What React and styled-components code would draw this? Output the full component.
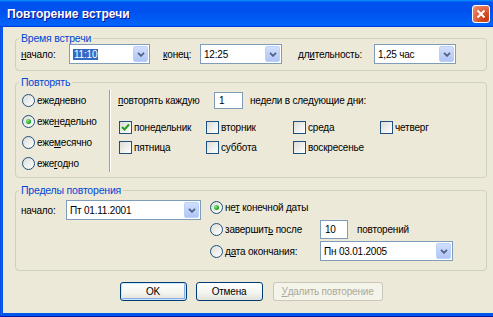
import React from "react";
import styled, { createGlobalStyle } from "styled-components";

const GlobalStyle = createGlobalStyle`
  html, body {
    margin: 0;
    padding: 0;
    overflow: hidden;
  }
  body {
    width: 493px;
    height: 317px;
    background: #fff;
    font-family: "Liberation Sans", Arial, sans-serif;
    font-size: 10px;
    letter-spacing: -0.2px;
    color: #000;
  }
`;

const Window = styled.div`
  width: 496px;
  height: 317px;
  display: flex;
  flex-direction: column;
  box-sizing: border-box;
  background: linear-gradient(90deg, #0831D9 0, #166AEE 1px, #0055EA 2px, #0055EA calc(100% - 2px), #0831D9 100%);
  border-bottom: 1px solid #0019A8;
`;

const TitleBar = styled.div`
  height: 27px;
  flex: none;
  display: flex;
  align-items: center;
  justify-content: space-between;
  padding: 0 6px 0 7px;
  background: linear-gradient(180deg, #0997ff, #0053ee 8%, #0050ee 40%, #0062f8 88%, #0066ff 93%, #005bff 95%, #003dd7 96%, #003dd7);
`;

const Title = styled.div`
  color: #fff;
  font-weight: bold;
  font-size: 12px;
  letter-spacing: 0;
  text-shadow: 1px 1px #0F1089;
`;

const CloseButton = styled.div`
  width: 18px;
  height: 18px;
  box-sizing: border-box;
  border: 1px solid #fff;
  border-radius: 3px;
  background: radial-gradient(circle at 80% 80%, #C23A12 0%, #DD5B33 45%, #E9876A 85%, #F6C6B5 100%);
  display: flex;
  align-items: center;
  justify-content: center;
`;

const Client = styled.div`
  flex: 1;
  margin: 0 3px 3px 3px;
  background: #ECE9D8;
  padding: 5px 6px 0 12px;
  display: flex;
  flex-direction: column;
`;

const Group = styled.fieldset`
  margin: ${(p) => p.$mt || 0}px 0 0 0;
  padding: 0;
  border: 1px solid #D0D0BF;
  border-radius: 4px;
  min-width: 0;
`;

const Legend = styled.legend`
  color: #0046D5;
  font-size: 10.5px;
  line-height: 12px;
  padding: 0 2px;
  margin-left: 3px;
`;

const Row = styled.div`
  display: flex;
  align-items: center;
  height: ${(p) => p.$h || 20}px;
`;

const TimeRow = styled(Row)`
  padding: 0 0 6px 5px;
`;

const FieldLabel = styled.span`
  width: ${(p) => p.$w}px;
  margin-left: ${(p) => p.$ml || 0}px;
  flex: none;
  white-space: nowrap;
  color: ${(p) => (p.$muted ? "#ACA899" : "#000")};
`;

const U = styled.span`
  text-decoration: underline;
`;

const Combo = styled.div`
  width: ${(p) => p.$w}px;
  height: ${(p) => p.$h || 20}px;
  flex: none;
  box-sizing: border-box;
  border: 1px solid #7F9DB9;
  background: #fff;
  display: flex;
  align-items: center;
  padding: 1px;
`;

const ComboValue = styled.div`
  flex: 1;
  padding-left: 2px;
  white-space: nowrap;
  overflow: hidden;
`;

const Selected = styled.span`
  background: #316AC5;
  color: #fff;
  padding: 1px 1px 2px;
`;

const DropButton = styled.div`
  width: 15px;
  align-self: stretch;
  box-sizing: border-box;
  border: 1px solid #BAD1FC;
  border-radius: 2px;
  background: linear-gradient(180deg, #D2DEFD 0%, #BDCFF8 60%, #B1C6F5 100%);
  display: flex;
  align-items: center;
  justify-content: center;
`;

const TextBox = styled.div`
  width: ${(p) => p.$w}px;
  height: ${(p) => p.$h}px;
  flex: none;
  box-sizing: border-box;
  border: 1px solid #7F9DB9;
  background: #fff;
  padding: 1px 4px;
  display: flex;
  align-items: center;
`;

const RepeatBody = styled.div`
  display: flex;
  padding: 2px 0 3px 0;
`;

const Options = styled.div`
  width: 93px;
  padding-left: 6px;
  box-sizing: border-box;
  display: flex;
  flex-direction: column;
`;

const OptionRow = styled.label`
  display: flex;
  align-items: center;
  gap: 2px;
  height: ${(p) => p.$h || 21}px;
  white-space: nowrap;
`;

const RadioCircle = styled.span`
  width: 13px;
  height: 13px;
  flex: none;
  box-sizing: border-box;
  border-radius: 50%;
  border: 1px solid #1C5180;
  background: linear-gradient(135deg, #DCDCD7, #FFFFFF);
  display: flex;
  align-items: center;
  justify-content: center;

  &::after {
    content: "";
    display: ${(p) => (p.$checked ? "block" : "none")};
    width: 5px;
    height: 5px;
    border-radius: 50%;
    background: radial-gradient(circle at 35% 35%, #8CE88C, #119E11 70%);
  }
`;

const Separator = styled.div`
  width: 1px;
  height: 82px;
  background: #9D9DA1;
  box-shadow: 1px 0 #fff;
  flex: none;
`;

const Weekly = styled.div`
  padding-left: 8px;
  display: flex;
  flex-direction: column;
`;

const DaysGrid = styled.div`
  display: grid;
  grid-template-columns: repeat(4, 87px);
  grid-auto-rows: 20px;
  margin: 6px 0 0 1px;
`;

const CheckItem = styled.label`
  display: flex;
  align-items: center;
  gap: 2px;
  white-space: nowrap;
`;

const CheckBox = styled.span`
  width: 13px;
  height: 13px;
  flex: none;
  box-sizing: border-box;
  border: 1px solid #1C5180;
  background: linear-gradient(135deg, #DCDCD7, #FFFFFF);
  display: flex;
  align-items: center;
  justify-content: center;
`;

const LimitBody = styled.div`
  display: flex;
  padding-bottom: 8px;
`;

const StartPart = styled.div`
  display: flex;
  align-items: center;
  align-self: flex-start;
  padding: 4px 0 0 5px;
`;

const EndOptions = styled.div`
  margin-left: 9px;
  display: grid;
  grid-template-columns: 110px auto;
  grid-auto-rows: 22px;
  align-items: center;
`;

const Wide = styled.div`
  grid-column: 1 / -1;
`;

const InlineCell = styled.div`
  display: flex;
  align-items: center;
`;

const ButtonRow = styled.div`
  display: flex;
  justify-content: center;
  gap: 9px;
  margin-top: 11px;
`;

const Button = styled.div`
  width: ${(p) => p.$w}px;
  height: 19px;
  box-sizing: border-box;
  border: 1px solid ${(p) => (p.$disabled ? "#C9C7BA" : "#003C74")};
  border-radius: 3px;
  background: ${(p) =>
    p.$disabled ? "#F5F4EA" : "linear-gradient(180deg, #FFFFFF 0%, #F3F3EF 60%, #E2E1D9 100%)"};
  color: ${(p) => (p.$disabled ? "#ACA899" : "#000")};
  box-shadow: ${(p) => (p.$default ? "inset 0 0 0 1px #CEE7FF, inset -1px -1px 0 1px #89ADE4" : "none")};
  display: flex;
  align-items: center;
  justify-content: center;
  white-space: nowrap;
  margin-left: ${(p) => p.$ml || 0}px;
`;

const Chevron = () => (
  <svg width="8" height="5" viewBox="0 0 8 5">
    <polyline points="1,0.8 4,3.8 7,0.8" fill="none" stroke="#4D6185" strokeWidth="1.8" />
  </svg>
);

const Check = () => (
  <svg width="9" height="9" viewBox="0 0 9 9">
    <polyline points="1,4 3.5,6.5 8,1.5" fill="none" stroke="#21A121" strokeWidth="2" />
  </svg>
);

const Radio = ({ checked, children, h }) => (
  <OptionRow $h={h}>
    <RadioCircle $checked={checked} />
    <span>{children}</span>
  </OptionRow>
);

const Day = ({ checked, children }) => (
  <CheckItem>
    <CheckBox>{checked && <Check />}</CheckBox>
    <span>{children}</span>
  </CheckItem>
);

export default function App() {
  return (
    <>
      <GlobalStyle />
      <Window>
        <TitleBar>
          <Title>Повторение встречи</Title>
          <CloseButton>
            <svg width="10" height="10" viewBox="0 0 10 10">
              <path d="M1.5 1.5 L8.5 8.5 M8.5 1.5 L1.5 8.5" stroke="#fff" strokeWidth="2" />
            </svg>
          </CloseButton>
        </TitleBar>
        <Client>
          <Group>
            <Legend>Время встречи</Legend>
            <TimeRow>
              <FieldLabel $w={48}><U>н</U>ачало:</FieldLabel>
              <Combo $w={81}>
                <ComboValue><Selected>11:10</Selected></ComboValue>
                <DropButton><Chevron /></DropButton>
              </Combo>
              <FieldLabel $w={37} $ml={13}><U>к</U>онец:</FieldLabel>
              <Combo $w={82}>
                <ComboValue>12:25</ComboValue>
                <DropButton><Chevron /></DropButton>
              </Combo>
              <FieldLabel $w={76} $ml={16}>дл<U>и</U>тельность:</FieldLabel>
              <Combo $w={82}>
                <ComboValue>1,25 час</ComboValue>
                <DropButton><Chevron /></DropButton>
              </Combo>
            </TimeRow>
          </Group>

          <Group $mt={5}>
            <Legend>Повторять</Legend>
            <RepeatBody>
              <Options>
                <Radio>еже<U>д</U>невно</Radio>
                <Radio checked>еже<U>н</U>едельно</Radio>
                <Radio>еже<U>м</U>есячно</Radio>
                <Radio>еже<U>г</U>одно</Radio>
              </Options>
              <Separator />
              <Weekly>
                <Row $h={21}>
                  <FieldLabel $w={96}><U>п</U>овторять каждую</FieldLabel>
                  <TextBox $w={29} $h={17}>1</TextBox>
                  <FieldLabel $ml={7}>недели в следующие дни:</FieldLabel>
                </Row>
                <DaysGrid>
                  <Day checked>понедельник</Day>
                  <Day>вторник</Day>
                  <Day>среда</Day>
                  <Day>четверг</Day>
                  <Day>пятница</Day>
                  <Day>суббота</Day>
                  <Day>воскресенье</Day>
                </DaysGrid>
              </Weekly>
            </RepeatBody>
          </Group>

          <Group $mt={6}>
            <Legend>Пределы повторения</Legend>
            <LimitBody>
              <StartPart>
                <FieldLabel $w={45}>начало:</FieldLabel>
                <Combo $w={135}>
                  <ComboValue>Пт 01.11.2001</ComboValue>
                  <DropButton><Chevron /></DropButton>
                </Combo>
              </StartPart>
              <EndOptions>
                <Wide>
                  <Radio checked h={22}>не<U>т</U> конечной даты</Radio>
                </Wide>
                <Radio h={22}>завершит<U>ь</U> после</Radio>
                <InlineCell>
                  <TextBox $w={28} $h={19}>10</TextBox>
                  <FieldLabel $ml={9}>повторений</FieldLabel>
                </InlineCell>
                <Radio h={22}>д<U>а</U>та окончания:</Radio>
                <InlineCell>
                  <Combo $w={133}>
                    <ComboValue>Пн 03.01.2005</ComboValue>
                    <DropButton><Chevron /></DropButton>
                  </Combo>
                </InlineCell>
              </EndOptions>
            </LimitBody>
          </Group>

          <ButtonRow>
            <Button $w={67} $default>OK</Button>
            <Button $w={67}>Отмена</Button>
            <Button $w={110} $disabled $ml={1}><U>У</U>далить повторение</Button>
          </ButtonRow>
        </Client>
      </Window>
    </>
  );
}
